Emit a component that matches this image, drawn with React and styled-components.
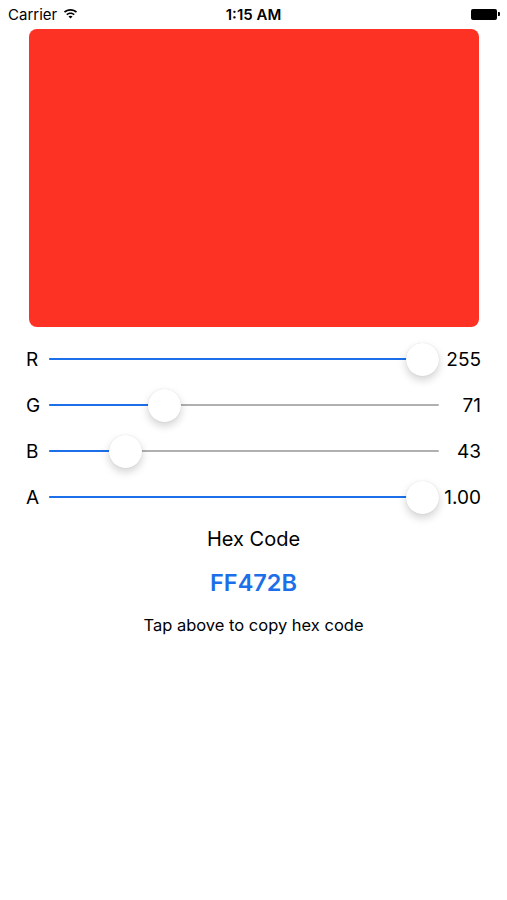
import styled, { createGlobalStyle } from 'styled-components';

const channels = [
  { label: 'R', value: 255, text: '255' },
  { label: 'G', value: 71, text: '71' },
  { label: 'B', value: 43, text: '43' },
  { label: 'A', value: 255, text: '1.00' },
];

const thumbSize = 33;
const trackWidth = 390;

function WifiIcon() {
  return (
    <svg width="15" height="11" viewBox="0 0 15 11">
      <path d="M7.5 1C4.9 1 2.6 2 0.9 3.6L2.1 4.8C3.5 3.5 5.4 2.7 7.5 2.7S11.5 3.5 12.9 4.8L14.1 3.6C12.4 2 10.1 1 7.5 1Z" fill="#000" />
      <path d="M7.5 4.4C5.8 4.4 4.3 5 3.2 6L4.4 7.2C5.2 6.5 6.3 6.1 7.5 6.1S9.8 6.5 10.6 7.2L11.8 6C10.7 5 9.2 4.4 7.5 4.4Z" fill="#000" />
      <path d="M7.5 7.7C6.7 7.7 6 8 5.5 8.5L7.5 10.5L9.5 8.5C9 8 8.3 7.7 7.5 7.7Z" fill="#000" />
    </svg>
  );
}

function Slider({ value }) {
  const ratio = value / 255;
  const center = thumbSize / 2 + ratio * (trackWidth - thumbSize);
  return (
    <Track>
      <Fill style={{ width: center }} />
      <Thumb style={{ left: center - thumbSize / 2 }} />
    </Track>
  );
}

function App() {
  return (
    <Screen>
      <GlobalStyle />
      <StatusBar>
        <Carrier>
          Carrier
          <WifiIcon />
        </Carrier>
        <Time>1:15 AM</Time>
        <Battery>
          <BatteryBody />
          <BatteryNub />
        </Battery>
      </StatusBar>
      <Swatch />
      <Sliders>
        {channels.map((c) => (
          <Row key={c.label}>
            <Label>{c.label}</Label>
            <Slider value={c.value} />
            <Value>{c.text}</Value>
          </Row>
        ))}
      </Sliders>
      <HexTitle>Hex Code</HexTitle>
      <HexValue>FF472B</HexValue>
      <Hint>Tap above to copy hex code</Hint>
    </Screen>
  );
}

const GlobalStyle = createGlobalStyle`
  body {
    margin: 0;
    background: #fff;
    font-family: Inter, "Liberation Sans", Arial, sans-serif;
    color: #000;
  }
`;

const Screen = styled.div`
  width: 507px;
  height: 900px;
  background: #fff;
  display: flex;
  flex-direction: column;
`;

const StatusBar = styled.div`
  height: 28px;
  display: flex;
  align-items: center;
  justify-content: space-between;
  padding: 0 7px 0 8px;
  position: relative;
`;

const Carrier = styled.div`
  display: flex;
  align-items: center;
  gap: 6px;
  font-size: 15px;
  svg {
    margin-top: -2px;
  }
`;

const Time = styled.div`
  position: absolute;
  left: 0;
  right: 0;
  text-align: center;
  font-size: 15px;
  font-weight: 600;
  pointer-events: none;
`;

const Battery = styled.div`
  display: flex;
  align-items: center;
`;

const BatteryBody = styled.div`
  width: 26px;
  height: 11px;
  background: #000;
  border-radius: 2px;
`;

const BatteryNub = styled.div`
  width: 2px;
  height: 4px;
  background: #000;
  border-radius: 0 1px 1px 0;
  margin-left: 1px;
`;

const Swatch = styled.div`
  margin: 1px 28px 0 29px;
  height: 298px;
  background: #fd3124;
  border-radius: 8px;
`;

const Sliders = styled.div`
  margin-top: 9px;
  padding: 0 26px;
  display: flex;
  flex-direction: column;
`;

const Row = styled.div`
  height: 46px;
  display: flex;
  align-items: center;
`;

const Label = styled.div`
  width: 23px;
  font-size: 19px;
`;

const Track = styled.div`
  position: relative;
  width: ${trackWidth}px;
  height: 2px;
  background: #b0b0b0;
  border-radius: 1px;
`;

const Fill = styled.div`
  height: 100%;
  background: #1c6fe8;
  border-radius: 1px;
`;

const Thumb = styled.div`
  position: absolute;
  top: ${1 - thumbSize / 2}px;
  width: ${thumbSize}px;
  height: ${thumbSize}px;
  border-radius: 50%;
  background: #fff;
  box-shadow: 0 4px 8px rgba(0, 0, 0, 0.18), 0 0 1px rgba(0, 0, 0, 0.15);
`;

const Value = styled.div`
  flex: 1;
  text-align: right;
  font-size: 19px;
`;

const HexTitle = styled.div`
  margin-top: 8px;
  text-align: center;
  font-size: 20px;
  line-height: 22px;
`;

const HexValue = styled.div`
  margin-top: 20px;
  text-align: center;
  font-size: 23.5px;
  line-height: 26px;
  font-weight: 600;
  color: #1c6fe8;
`;

const Hint = styled.div`
  margin-top: 19px;
  text-align: center;
  font-size: 16.5px;
  line-height: 20px;
`;

export default App;
